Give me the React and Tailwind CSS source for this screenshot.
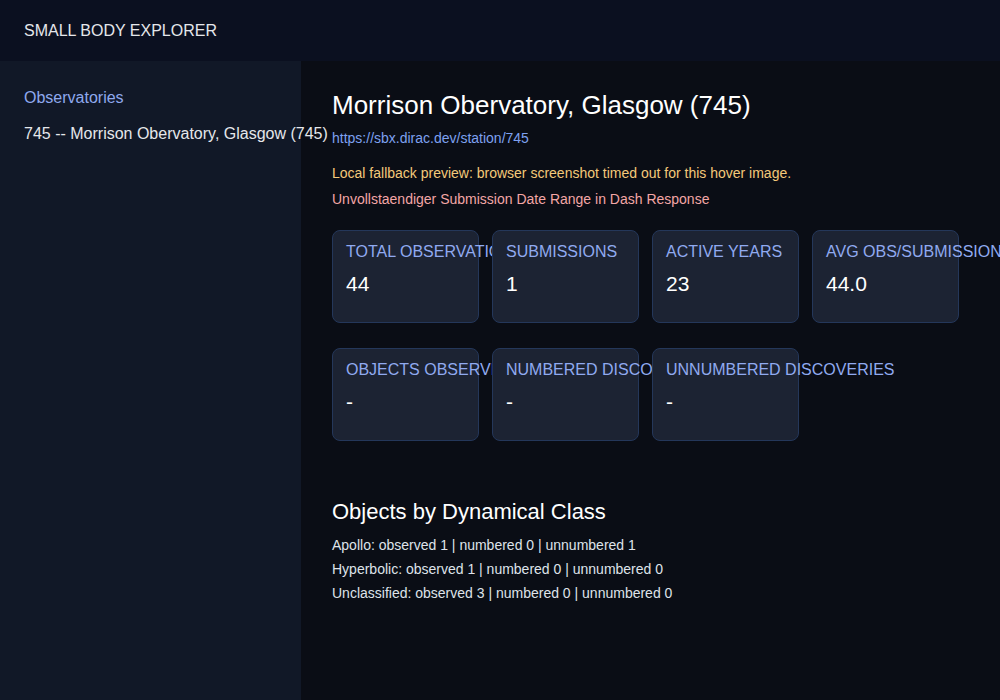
const statsTop = [
  { label: 'TOTAL OBSERVATIONS', value: '44' },
  { label: 'SUBMISSIONS', value: '1' },
  { label: 'ACTIVE YEARS', value: '23' },
  { label: 'AVG OBS/SUBMISSION', value: '44.0' },
];

const statsBottom = [
  { label: 'OBJECTS OBSERVED', value: '-' },
  { label: 'NUMBERED DISCOVERIES', value: '-' },
  { label: 'UNNUMBERED DISCOVERIES', value: '-' },
];

const classes = [
  'Apollo: observed 1 | numbered 0 | unnumbered 1',
  'Hyperbolic: observed 1 | numbered 0 | unnumbered 0',
  'Unclassified: observed 3 | numbered 0 | unnumbered 0',
];

function StatCard({ label, value }) {
  return (
    <div className="w-[147px] h-[93px] shrink-0 rounded-lg border border-[#24375a] bg-[#1c2333] px-[13px] pt-[12px]">
      <div className="whitespace-nowrap text-[16px] leading-[18px] text-[#90aaf0]">{label}</div>
      <div className="mt-[11px] text-[21px] leading-[24px] text-white">{value}</div>
    </div>
  );
}

export default function App() {
  return (
    <div className="flex h-[700px] flex-col bg-[#0a0d15] font-['Liberation_Sans',Arial,sans-serif]">
      {/* Top bar */}
      <header className="flex h-[61px] shrink-0 items-center bg-[#0b1020] px-6">
        <span className="text-[16px] text-[#e5e7eb]">SMALL BODY EXPLORER</span>
      </header>

      <div className="flex flex-1">
        {/* Sidebar */}
        <aside className="w-[301px] shrink-0 bg-[#111827] px-6 pt-[27px]">
          <div className="text-[16px] leading-[20px] text-[#8fa9ee]">Observatories</div>
          <div className="mt-4 whitespace-nowrap text-[16px] leading-[20px] text-[#e5e7eb]">
            745 -- Morrison Obervatory, Glasgow (745)
          </div>
        </aside>

        {/* Main */}
        <main className="flex-1 pl-[31px] pr-8 pt-[30px]">
          <h1 className="text-[26px] leading-[28px] text-white">Morrison Obervatory, Glasgow (745)</h1>
          <div className="mt-[10px] text-[14px] leading-[18px] text-[#7ea1f0]">https://sbx.dirac.dev/station/745</div>
          <div className="mt-[17px] text-[14px] leading-[18px] text-[#f4c97a]">
            Local fallback preview: browser screenshot timed out for this hover image.
          </div>
          <div className="mt-[8px] text-[14px] leading-[18px] text-[#f3a6a6]">
            Unvollstaendiger Submission Date Range in Dash Response
          </div>

          <div className="mt-[22px] flex gap-[13px]">
            {statsTop.map((s) => (
              <StatCard key={s.label} {...s} />
            ))}
          </div>
          <div className="mt-[25px] flex gap-[13px]">
            {statsBottom.map((s) => (
              <StatCard key={s.label} {...s} />
            ))}
          </div>

          <h2 className="mt-[59px] text-[22px] leading-[24px] text-white">Objects by Dynamical Class</h2>
          <div className="mt-[9px] flex flex-col">
            {classes.map((c) => (
              <div key={c} className="text-[14px] leading-[24px] text-[#dfe3ea]">
                {c}
              </div>
            ))}
          </div>
        </main>
      </div>
    </div>
  );
}
